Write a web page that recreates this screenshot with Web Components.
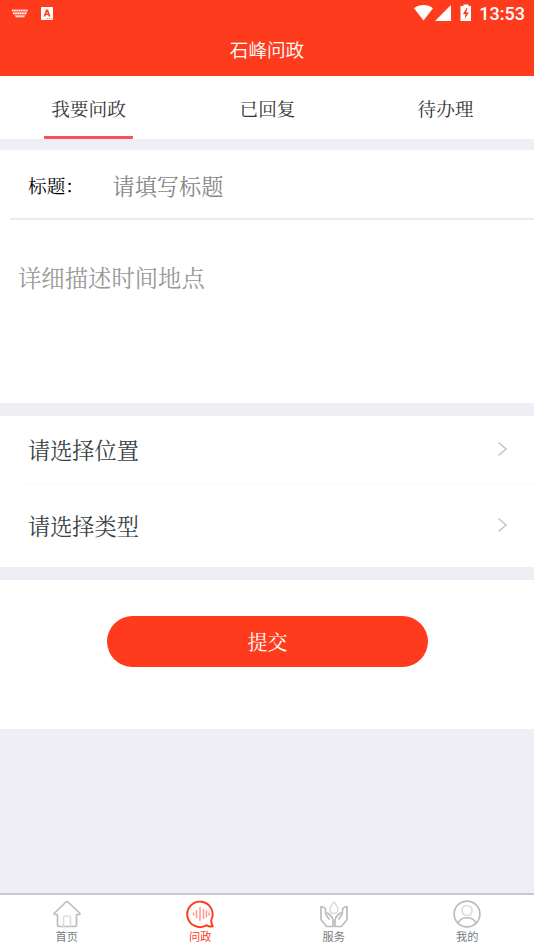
<!DOCTYPE html>
<html lang="zh-CN">
<head>
<meta charset="utf-8">
<title>石峰问政</title>
<style>
html,body{margin:0;height:100%;background:#efeef4;overflow:hidden}
</style>
</head>
<body>
<petition-page></petition-page>
<script>
const define = (name, html) => {
  const t = document.createElement('template');
  t.innerHTML = html;
  customElements.define(name, class extends HTMLElement {
    constructor() {
      super();
      this.attachShadow({mode: 'open'}).append(t.content.cloneNode(true));
    }
  });
};

define('status-bar', `<style>
:host{display:flex;height:26px;box-sizing:border-box;padding:0 9px 0 12px;color:#fff;font:500 18px/27px Roboto,sans-serif}
svg{display:block;flex:none}
.gap{flex:1}
</style>
<svg width="42" height="26" fill="#fff">
  <path d="M0 9.500h16v2H0zM1 12.200h14v2H1zM2.500 14.500h11v1.500H2.500z" fill-opacity=".4"/>
  <path d="M0 10.500h16M1 13.200h14" stroke="#fff" stroke-width="1.6" stroke-dasharray="1.400 .9"/>
  <path d="M3.500 15.700h9v1.600h-9z" fill-opacity=".8"/>
  <rect x="29" y="7" width="12" height="13" rx=".8"/>
  <path fill-rule="evenodd" d="M31.500 16.500 34 9.500h2l2.500 7h-1.900l-.5-1.500h-2.300l-.5 1.500zM34.300 13.700h1.400L35 11.500z" fill="#ff3b1d"/>
  <path d="M35 18.500h5.500" stroke="#ff3b1d" stroke-dasharray="1 1" stroke-opacity=".7"/>
</svg>
<span class="gap"></span>
<svg width="65" height="26" fill="#fff">
  <path d="M0 8.200C5.500 4 13.500 4 19 8.200L9.500 20.500z"/>
  <path d="M37 5v16H21z"/>
  <path d="M49.500 4.500h5V6H57v15H46.500V6h3z"/>
  <path d="M52.700 8 48.900 14h2.600l-.8 5 4.200-6.600h-2.700l1.300-4.400z" fill="#ff3b1d"/>
</svg>
<slot></slot>`);

define('title-bar', `<style>
:host{display:block;height:50px;text-align:center;color:#fff;font:350 18.6px/46px "Noto Sans CJK SC",sans-serif}
</style><slot></slot>`);

define('tab-item', `<style>
:host{display:flex;flex:1;justify-content:center;height:63px;color:#333;font-size:18.7px;line-height:63px}
span{box-sizing:border-box;width:89px;height:63px;text-align:center;white-space:nowrap}
:host([active]) span{margin-right:1px;background:linear-gradient(#f9515c,#f9515c) bottom/100% 3px no-repeat;border-radius:1px}
:host(:not([active])) span{padding-left:1px}
</style><span><slot></slot></span>`);

define('tab-strip', `<style>
:host{display:flex;background:#fff;height:63px;padding-bottom:.4px}
</style><slot></slot>`);

define('title-field', `<style>
:host{display:flex;height:70px;margin-left:10px;padding-left:18px;box-sizing:border-box;border-bottom:2px solid #ebebec;line-height:70px}
.label{width:84.500px;font-size:18.7px;color:#000}
.hint{font-size:22.2px;color:#888}
</style><span class="label"><slot name="label"></slot></span><span class="hint"><slot></slot></span>`);

define('detail-field', `<style>
:host{display:block;height:183px;box-sizing:border-box;padding:37px 18px 0;font-size:23.35px;line-height:40px;color:#999}
</style><slot></slot>`);

define('picker-row', `<style>
:host{display:flex;align-items:center;justify-content:space-between;box-sizing:border-box;padding:0 26px 2px 28px;height:68px;font-size:22.2px;color:#3b4144}
svg{display:block}
</style><slot></slot><svg width="11" height="16" fill="none" stroke="#c4c4c6" stroke-width="1.5"><path d="m1.500 1.500 7.500 6.500-7.500 6.500"/></svg>`);

define('form-card', `<style>
:host{display:block;background:#fff}
</style><slot></slot>`);

define('submit-button', `<style>
:host{display:block;width:321px;height:51.4px;margin:0 auto 0 107px;border-radius:26px;background:#ff3b1d;color:#fff;text-align:center;font-size:20px;line-height:51px}
</style><slot></slot>`);

define('nav-item', `<style>
:host{display:flex;flex:1;flex-direction:column;align-items:center;color:#777b80;font:400 11.2px/14px "Noto Sans CJK SC",sans-serif}
:host([active]){color:#ff3b1d}
::slotted(svg){display:block;width:28px;height:28px;margin:5px 0 1px;fill:none;stroke:#bdbdbd;stroke-width:1.700;stroke-linejoin:round;stroke-linecap:round}
:host([active]) ::slotted(svg){stroke:#ff3b1d}
</style><slot name="icon"></slot><span><slot></slot></span>`);

define('bottom-nav', `<style>
:host{display:flex;height:57px;box-sizing:border-box;border-top:2px solid #c8c8cc;background:#fff}
</style><slot></slot>`);

define('petition-page', `<style>
:host{display:flex;flex-direction:column;width:534px;height:950px;background:#efeef4;font-family:"Noto Serif CJK SC","Noto Sans CJK SC",serif}
header{height:76px;background:#ff3b1d}
.fields{margin-top:11px;height:253px}
.pickers{margin-top:13px;height:151px}
.pickers .last{height:82px}
.line{height:1px;margin-left:22px;background:#f8f8f8}
.action{margin-top:13px;height:149px;box-sizing:border-box;padding-top:35.600px}
.space{flex:1}
</style>
<header><status-bar>13:53</status-bar><title-bar>石峰问政</title-bar></header>
<tab-strip><tab-item active>我要问政</tab-item><tab-item>已回复</tab-item><tab-item>待办理</tab-item></tab-strip>
<form-card class="fields">
  <title-field><span slot="label">标题：</span>请填写标题</title-field>
  <detail-field>详细描述时间地点</detail-field>
</form-card>
<form-card class="pickers">
  <picker-row>请选择位置</picker-row><div class="line"></div><picker-row class="last">请选择类型</picker-row>
</form-card>
<form-card class="action"><submit-button>提交</submit-button></form-card>
<div class="space"></div>
<bottom-nav>
  <nav-item><svg slot="icon" viewBox="0 0 28 28"><path d="M4.500 14.500v10a2 2 0 0 0 2 2h15a2 2 0 0 0 2-2v-10h3c.6-.4.4-1 0-1.500L15 2q-1-.8-2 0L1.500 13c-.5.500-.5 1.200 0 1.500z"/><path d="M10.500 26v-8q0-2 2-2h3q2 0 2 2v8" stroke="#dedede"/></svg>首页</nav-item>
  <nav-item active><svg slot="icon" viewBox="0 0 28 28"><path d="M20.500 25.200A12.700 12.700 0 1 1 25.300 20Q25 23 26.700 26.300q-3.500.8-6.200-1.100z" stroke-width="1.900"/><path d="M7.500 13v2M10.500 10.500v7M14 7.500v13M17.500 9.500v9M20.500 11v6M23 13v2" stroke="#ff9a8a" stroke-width="1.500"/></svg>问政</nav-item>
  <nav-item><svg slot="icon" viewBox="0 0 28 28"><path d="M1 6.500v13l5.500 7H13v-6q0-3-2.500-5l-3-2.500q-2 0-1.300 2L9 19M5.500 13V9q-1-2-4.500-2.500M27 6.500v13l-5.500 7H15v-6q0-3 2.500-5l3-2.500q2 0 1.300 2L19 19M22.500 13V9q1-2 4.500-2.500"/><path d="M14 2q-4 5-4 7.500a4 4 0 0 0 8 0Q18 7 14 2z" stroke="#dedede"/></svg>服务</nav-item>
  <nav-item><svg slot="icon" viewBox="0 0 28 28"><circle cx="14" cy="14" r="12.900"/><circle cx="14" cy="10.500" r="5" stroke="#dedede"/><path d="M5 23c3-7 15-7 18 0"/></svg>我的</nav-item>
</bottom-nav>`);
</script>
</body>
</html>
